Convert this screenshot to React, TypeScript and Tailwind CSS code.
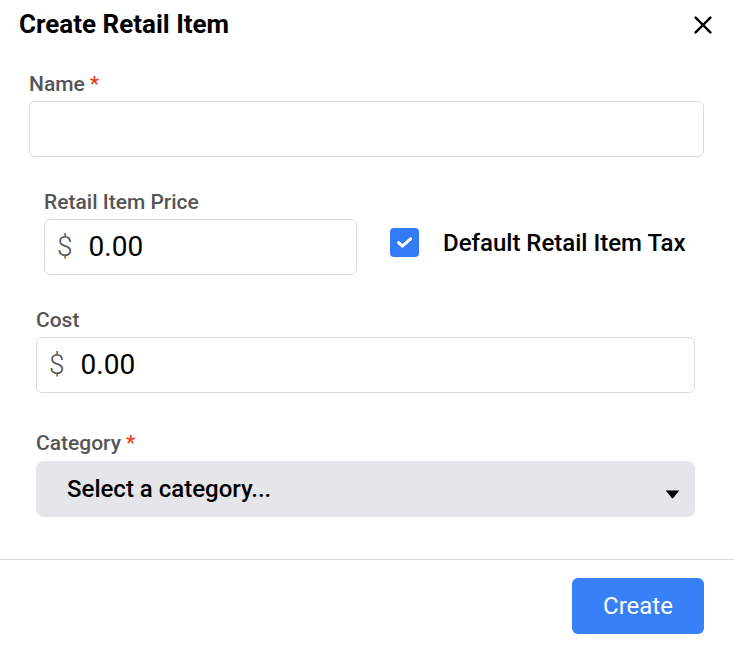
function Label({ text, required, className = "" }: { text: string; required?: boolean; className?: string }) {
  return (
    <div className={`text-[21px] font-medium leading-6 text-[#555555] ${className}`}>
      {text}
      {required && <span className="ml-[5px] text-[#e2401c]">*</span>}
    </div>
  );
}

function MoneyInput({ className = "" }: { className?: string }) {
  return (
    <div className={`flex h-14 shrink-0 items-center rounded-md border border-[#dcdcdc] bg-white pl-[12px] ${className}`}>
      <span className="text-[28px] font-light text-[#555555]">$</span>
      <span className="ml-[16px] text-[28px] text-black">0.00</span>
    </div>
  );
}

export default function App() {
  return (
    <div className="h-[648px] w-[734px] bg-white font-['Roboto',sans-serif]">
      <header className="flex items-start justify-between pl-[19px] pr-[22px] pt-[8px]">
        <h1 className="text-[26px] font-bold leading-8 text-black">Create Retail Item</h1>
        <button type="button" aria-label="Close" className="mt-[8px] text-black">
          <svg viewBox="0 0 18 18" className="h-[18px] w-[18px]" fill="none" stroke="currentColor" strokeWidth={2.4} strokeLinecap="round">
            <path d="M1.6 1.6l14.8 14.8M16.4 1.6L1.6 16.4" />
          </svg>
        </button>
      </header>

      <div className="mt-[32px] px-[29px]">
        <Label text="Name" required />
        <div className="mt-[5px] h-14 w-[675px] rounded-md border border-[#dcdcdc] bg-white" />
      </div>

      <div className="mt-[33px] pl-[44px]">
        <Label text="Retail Item Price" />
        <div className="mt-[5px] flex items-start">
          <MoneyInput className="w-[313px]" />
          <div className="ml-[33px] mt-[9px] flex h-[29px] items-center">
            <div className="h-[29px] w-[29px] rounded-[4px] bg-[#3479f6]">
              <svg viewBox="0 0 29 29" className="h-[29px] w-[29px]" fill="none" stroke="white" strokeWidth={3} strokeLinecap="round" strokeLinejoin="round">
                <path d="M8.6 14.6l3.8 3.6L20.6 10.8" />
              </svg>
            </div>
            <span className="ml-[24px] text-[24px] font-medium leading-none text-black">Default Retail Item Tax</span>
          </div>
        </div>
      </div>

      <div className="mt-[33px] pl-[36px]">
        <Label text="Cost" />
        <MoneyInput className="mt-[5px] w-[659px]" />
      </div>

      <div className="mt-[38px] pl-[36px]">
        <Label text="Category" required />
        <div className="mt-[6px] flex h-14 w-[659px] items-center justify-between rounded-lg bg-[#e5e6e9] pl-[31px] pr-[15px]">
          <span className="text-[24px] font-medium text-black">Select a category...</span>
          <svg viewBox="0 0 16 10" className="mt-[10px] h-[9px] w-[15px]" fill="black">
            <path d="M0.5 0.5h15L8.8 8.8a1.1 1.1 0 0 1-1.6 0z" />
          </svg>
        </div>
      </div>

      <div className="mt-[42px] border-t border-[#dcdcdc]" />

      <div className="flex justify-end pr-[30px] pt-[18px]">
        <button type="button" className="h-14 w-[132px] rounded-md bg-[#3880f8] text-[24px] font-normal text-white">
          Create
        </button>
      </div>
    </div>
  );
}
